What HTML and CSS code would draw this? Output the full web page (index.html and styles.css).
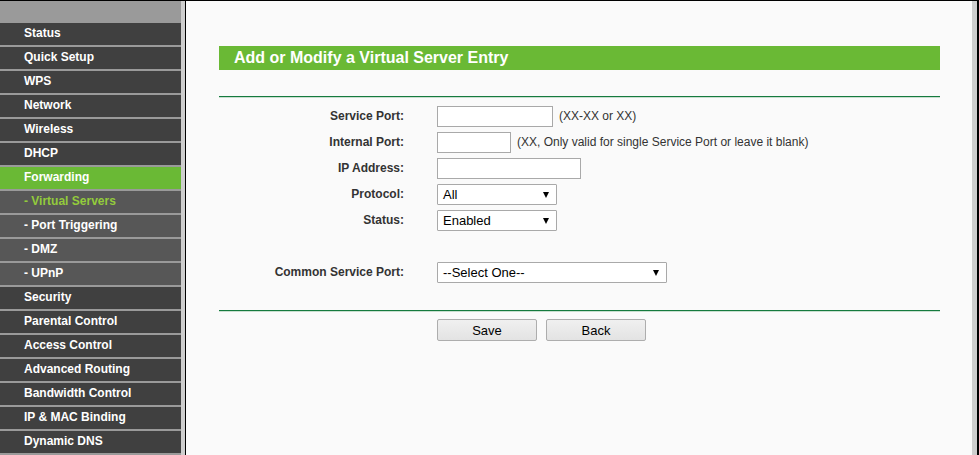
FILE: index.html
```html
<!DOCTYPE html>
<html>
<head>
<meta charset="utf-8">
<title>Virtual Servers</title>
<link rel="stylesheet" href="styles.css">
</head>
<body>
<div class="frame">
  <nav class="sidebar">
    <div class="side-head"></div>
    <a class="item">Status</a>
    <a class="item">Quick Setup</a>
    <a class="item">WPS</a>
    <a class="item">Network</a>
    <a class="item">Wireless</a>
    <a class="item">DHCP</a>
    <a class="item active">Forwarding</a>
    <a class="item sub current">- Virtual Servers</a>
    <a class="item sub">- Port Triggering</a>
    <a class="item sub">- DMZ</a>
    <a class="item sub">- UPnP</a>
    <a class="item">Security</a>
    <a class="item">Parental Control</a>
    <a class="item">Access Control</a>
    <a class="item">Advanced Routing</a>
    <a class="item">Bandwidth Control</a>
    <a class="item">IP &amp; MAC Binding</a>
    <a class="item">Dynamic DNS</a>
    <a class="item"></a>
  </nav>
  <div class="split"></div>
  <main class="content">
    <h1 class="title">Add or Modify a Virtual Server Entry</h1>
    <div class="rule first"></div>
    <div class="form">
      <div class="row">
        <label class="label">Service Port:</label>
        <div class="field"><input class="input w116" type="text"><span class="hint">(XX-XX or XX)</span></div>
      </div>
      <div class="row">
        <label class="label">Internal Port:</label>
        <div class="field"><input class="input w74" type="text"><span class="hint">(XX, Only valid for single Service Port or leave it blank)</span></div>
      </div>
      <div class="row">
        <label class="label">IP Address:</label>
        <div class="field"><input class="input w144" type="text"></div>
      </div>
      <div class="row">
        <label class="label">Protocol:</label>
        <div class="field"><span class="select w120">All</span></div>
      </div>
      <div class="row">
        <label class="label">Status:</label>
        <div class="field"><span class="select w120">Enabled</span></div>
      </div>
      <div class="row"></div>
      <div class="row">
        <label class="label">Common Service Port:</label>
        <div class="field"><span class="select w230">--Select One--</span></div>
      </div>
    </div>
    <div class="rule second"></div>
    <div class="buttons">
      <button class="btn" type="button">Save</button>
      <button class="btn" type="button">Back</button>
    </div>
  </main>
  <div class="scroll-edge"></div>
</div>
</body>
</html>
```
FILE: styles.css
```css
* { box-sizing: border-box; }
html, body {
  margin: 0;
  padding: 0;
  background: #fafafa;
}
body {
  font-family: "Liberation Sans", Arial, sans-serif;
  font-size: 12px;
  color: #333;
}
.frame {
  display: flex;
  height: 455px;
  overflow: hidden;
  border-top: 1px solid #000;
}
.sidebar {
  width: 181px;
  flex: none;
  display: flex;
  flex-direction: column;
  gap: 2px;
  background: #9a9a9a;
}
.side-head {
  height: 20px;
  flex: none;
}
.item {
  display: block;
  flex: none;
  height: 22px;
  line-height: 21px;
  padding-left: 24px;
  background: #404040;
  color: #fff;
  font-weight: bold;
  font-size: 12px;
  white-space: nowrap;
}
.item.active {
  background: #6ab935;
}
.item.sub {
  background: #575757;
}
.item.current {
  color: #93cb3c;
}
.split {
  width: 5px;
  flex: none;
  background: #cecece;
  border-right: 1px solid #000;
}
.content {
  flex: 1;
  background: #fafafa;
  padding: 45px 32px 0 33px;
}
.scroll-edge {
  width: 7px;
  flex: none;
  background: #cecece;
  border-right: 2px solid #000;
}
.title {
  margin: 0;
  height: 24px;
  line-height: 24px;
  padding-left: 15px;
  background: #6ab935;
  color: #fff;
  font-size: 16px;
  font-weight: bold;
}
.rule {
  height: 2px;
  border-top: 1px solid #157a3e;
  border-bottom: 1px solid #c8dfcf;
}
.rule.first { margin-top: 26px; }
.rule.second { margin-top: 25px; }
.form {
  margin-top: 5px;
  display: flex;
  flex-direction: column;
}
.row {
  display: grid;
  grid-template-columns: 218px 1fr;
  align-items: center;
  height: 26px;
}
.label {
  text-align: right;
  padding-right: 33px;
  font-weight: bold;
  color: #333;
}
.field {
  display: flex;
  align-items: center;
  gap: 6px;
}
.input {
  height: 21px;
  border: 1px solid #a9a9a9;
  background: #fff;
  margin: 0;
  padding: 0 4px;
  font-family: inherit;
  font-size: 13px;
}
.w116 { width: 116px; }
.w74 { width: 74px; }
.w144 { width: 144px; }
.w120 { width: 120px; }
.w230 { width: 230px; }
.hint {
  color: #333;
  font-size: 12px;
}
.select {
  position: relative;
  display: block;
  height: 21px;
  line-height: 19px;
  border: 1px solid #a9a9a9;
  border-radius: 1px;
  background: #fff;
  padding-left: 5px;
  font-size: 13px;
  color: #000;
}
.select::after {
  content: "";
  position: absolute;
  right: 7px;
  top: 7px;
  border-left: 3.5px solid transparent;
  border-right: 3.5px solid transparent;
  border-top: 6px solid #000;
}
.buttons {
  margin-top: 7px;
  padding-left: 218px;
  display: flex;
  gap: 9px;
}
.btn {
  width: 100px;
  height: 22px;
  margin: 0;
  padding: 0;
  border: 1px solid #adadad;
  border-radius: 2px;
  background: linear-gradient(#f0f0f0, #e3e3e3);
  font-family: inherit;
  font-size: 13px;
  color: #000;
}
```
